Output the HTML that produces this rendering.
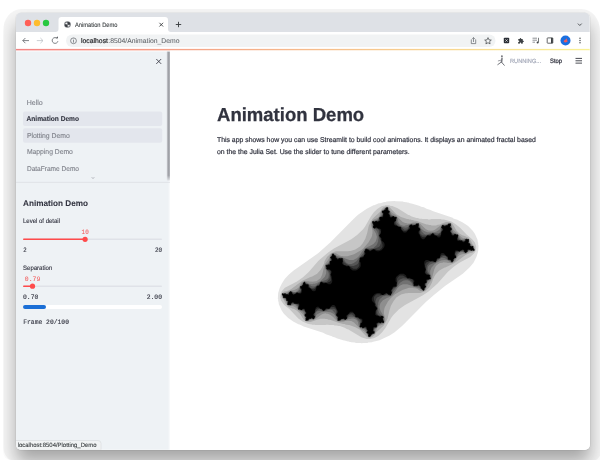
<!DOCTYPE html>
<html><head><meta charset="utf-8">
<style>
html,body{margin:0;padding:0;background:#fff;width:600px;height:460px;overflow:hidden}
#sc{position:absolute;left:2.8px;top:8.5px;width:597.2px;height:451.5px;overflow:hidden;border-radius:18px 18px 0 8px / 22px 22px 0 8px}
#win{position:absolute;left:13.2px;top:4.2px;width:573.7px;height:437px;border-radius:5px;background:#fff;
box-shadow:0 0 0 0.5px rgba(0,0,0,0.07),0 0 0 12.5px rgba(0,0,0,0.041),0 11.9px 17.1px -0.44px rgba(0,0,0,0.321)}
svg{position:absolute;left:0;top:0;will-change:transform}
text{font-family:"Liberation Sans",sans-serif;text-rendering:geometricPrecision}
.mono{font-family:"Liberation Mono",monospace}
</style></head>
<body>
<div id="sc"><div id="win"></div></div>
<svg width="600" height="460" viewBox="0 0 600 460">
<defs>
<clipPath id="wc"><rect x="16" y="12.7" width="573.7" height="437" rx="5"/></clipPath>
<linearGradient id="deco" x1="0" x2="1" y1="0" y2="0"><stop offset="0" stop-color="#ee5252"/><stop offset="1" stop-color="#f6ec6a"/></linearGradient>
<linearGradient id="sb" x1="0" x2="1" y1="0" y2="0"><stop offset="0" stop-color="#d2d4d8"/><stop offset="0.45" stop-color="#9c9ea4"/><stop offset="1" stop-color="#b4b6bb"/></linearGradient><linearGradient id="sbf" x1="0" x2="0" y1="0" y2="1"><stop offset="0" stop-color="#fff"/><stop offset="0.95" stop-color="#fff"/><stop offset="1" stop-color="#000"/></linearGradient><linearGradient id="sbe" x1="0" x2="1" y1="0" y2="0"><stop offset="0" stop-color="#eef2f5"/><stop offset="1" stop-color="#fafbfc"/></linearGradient><mask id="sbm"><rect x="160" y="51" width="15" height="131" fill="url(#sbf)"/></mask>
</defs>
<g clip-path="url(#wc)">
<!-- tab strip -->
<rect x="15" y="12" width="576" height="20" fill="#dee1e6"/>
<circle cx="28" cy="23" r="3.2" fill="#ff5f57"/>
<circle cx="37" cy="23" r="3.2" fill="#febc2e"/>
<circle cx="46" cy="23" r="3.2" fill="#28c840"/>
<!-- tab -->
<path d="M55.5 32 Q58.5 32 58.5 29 L58.5 20 Q58.5 17 61.5 17 L165 17 Q168 17 168 20 L168 29 Q168 32 171 32 Z" fill="#fff"/>
<g transform="translate(67.5 24.5)">
<circle r="3.3" fill="#7a7d82"/>
<ellipse cx="1.3" cy="-1.2" rx="1.5" ry="1.1" transform="rotate(40 1.3 -1.2)" fill="#3a3d42"/>
<ellipse cx="-1.3" cy="1.2" rx="1.5" ry="1.1" transform="rotate(40 -1.3 1.2)" fill="#3a3d42"/>
<ellipse cx="-1.1" cy="-1" rx="1" ry="0.8" fill="#f4f4f4"/>
<ellipse cx="1.1" cy="1.3" rx="1" ry="0.8" fill="#f4f4f4"/>
</g>
<text x="75" y="26.75" font-size="6.3" fill="#3c4043" textLength="42.5" lengthAdjust="spacingAndGlyphs" stroke="#3c4043" stroke-width="0.1">Animation Demo</text>
<path d="M159.4 22.8 L163.1 26.5 M163.1 22.8 L159.4 26.5" stroke="#3c4043" stroke-width="0.9"/>
<path d="M178.5 21.8 L178.5 27.2 M175.8 24.5 L181.2 24.5" stroke="#3c4043" stroke-width="0.95"/>
<path d="M577.9 23.6 L579.8 25.5 L581.7 23.6" fill="none" stroke="#3c4043" stroke-width="0.85"/>
<!-- toolbar -->
<rect x="15" y="32" width="576" height="17.5" fill="#fff"/>
<path d="M22.8 40.6 L29 40.6 M25.4 38 L22.8 40.6 L25.4 43.2" fill="none" stroke="#5f6368" stroke-width="0.8"/>
<path d="M36.8 40.6 L43 40.6 M40.4 38 L43 40.6 L40.4 43.2" fill="none" stroke="#bdc1c6" stroke-width="0.8"/>
<path d="M57.3 38.6 A2.9 2.9 0 1 0 57.9 41.2" fill="none" stroke="#5f6368" stroke-width="0.8"/>
<path d="M55.6 38.3 L58 38.3 L58 36.2 Z" fill="#5f6368"/>
<rect x="66" y="34.5" width="429.5" height="12.5" rx="6.25" fill="#f1f3f4"/>
<circle cx="73.5" cy="40.8" r="2.9" fill="none" stroke="#5f6368" stroke-width="0.7"/>
<path d="M73.5 40 L73.5 42.6" stroke="#5f6368" stroke-width="0.7"/>
<circle cx="73.5" cy="39" r="0.4" fill="#5f6368"/>
<text x="81" y="42.8" font-size="6.8" fill="#202124" textLength="27" lengthAdjust="spacingAndGlyphs" stroke="#202124" stroke-width="0.15">localhost</text>
<text x="108.3" y="42.8" font-size="6.8" fill="#5f6368" textLength="71.2" lengthAdjust="spacingAndGlyphs" stroke="#5f6368" stroke-width="0.05">:8504/Animation_Demo</text>
<!-- share -->
<path d="M471.6 39.6 L471.3 39.6 L471.3 43.6 L475.7 43.6 L475.7 39.6 L475.4 39.6 M473.5 42 L473.5 37.6 M472.2 38.9 L473.5 37.6 L474.8 38.9" fill="none" stroke="#5f6368" stroke-width="0.7"/>
<path d="M488 37.6 L489 39.9 L491.3 40.1 L489.6 41.6 L490.1 43.9 L488 42.7 L485.9 43.9 L486.4 41.6 L484.7 40.1 L487 39.9 Z" fill="none" stroke="#3c4043" stroke-width="0.7" stroke-linejoin="round"/>
<!-- ext icons -->
<rect x="503.8" y="37.8" width="5.4" height="5.4" rx="0.8" fill="#2b2f36"/>
<path d="M505.3 39.3 L507.7 41.7 M507.7 39.3 L505.3 41.7" stroke="#fff" stroke-width="0.6"/>
<path transform="translate(517.6 37.6) scale(0.275)" fill="#3c4043" d="M20.5 11H19V7c0-1.1-.9-2-2-2h-4V3.5C13 2.12 11.88 1 10.5 1S8 2.12 8 3.5V5H4c-1.1 0-1.99.9-1.99 2v3.8H3.5c1.49 0 2.7 1.21 2.7 2.7s-1.21 2.7-2.7 2.7H2V20c0 1.1.9 2 2 2h3.8v-1.5c0-1.49 1.21-2.7 2.7-2.7 1.49 0 2.7 1.21 2.7 2.7V22H17c1.1 0 2-.9 2-2v-4h1.5c1.38 0 2.5-1.12 2.5-2.5S21.88 11 20.5 11z"/>
<path d="M532.5 38.2 L537 38.2 M532.5 40.2 L537 40.2 M532.5 42.2 L535 42.2" stroke="#5f6368" stroke-width="0.7"/>
<path d="M538.5 37.8 L538.5 42.4" stroke="#3c4043" stroke-width="0.7"/>
<circle cx="537.6" cy="42.6" r="1" fill="#3c4043"/>
<rect x="547.2" y="37.9" width="5.6" height="5.3" rx="0.5" fill="none" stroke="#3c4043" stroke-width="0.8"/>
<rect x="551" y="37.9" width="1.8" height="5.3" fill="#3c4043"/>
<circle cx="565.5" cy="40.5" r="5" fill="#1a6fe0"/>
<path d="M563.6 41.4 Q564.2 39.8 565.8 39.6 L566.4 38.2 Q567.2 39.4 567 40.2 Q568.2 40.8 567.6 41.6 Q566.2 42.8 564.6 42.2 Z" fill="#ee5a5a"/>
<circle cx="580" cy="38.2" r="0.7" fill="#3c4043"/><circle cx="580" cy="40.5" r="0.7" fill="#3c4043"/><circle cx="580" cy="42.8" r="0.7" fill="#3c4043"/>
<!-- decoration -->
<rect x="15" y="48.9" width="576" height="1.5" fill="url(#deco)" opacity="0.72"/>
<!-- main -->
<rect x="170" y="50.6" width="421" height="400" fill="#fff"/>
<!-- header -->
<g stroke="#74767c" stroke-linecap="round" fill="none">
<circle cx="501.9" cy="56.3" r="0.95" fill="#74767c" stroke="none"/>
<path d="M502 58.3 L501.6 62" stroke-width="1.5"/>
<path d="M501.6 60 L498.3 60.9" stroke-width="0.7"/>
<path d="M501.4 62 L497.8 64.6" stroke-width="1"/>
<path d="M501.4 62 L504.3 65.3" stroke-width="1"/>
</g>
<text x="510" y="63" font-size="6.0" fill="#a3a8b8" textLength="31" lengthAdjust="spacingAndGlyphs" stroke="#a3a8b8" stroke-width="0.15">RUNNING...</text>
<text x="550" y="63.3" font-size="6.4" fill="#31333f" textLength="12" lengthAdjust="spacingAndGlyphs" stroke="#31333f" stroke-width="0.25">Stop</text>
<g fill="#55575e"><rect x="575.5" y="57.9" width="6.5" height="1.05"/><rect x="575.5" y="60.25" width="6.5" height="1.05"/><rect x="575.5" y="62.6" width="6.5" height="1.05"/></g>
<!-- title -->
<text x="217" y="121.3" font-size="18.9" font-weight="bold" fill="#31333f" textLength="147.2" lengthAdjust="spacingAndGlyphs" stroke="#31333f" stroke-width="0.25">Animation Demo</text>
<text x="217" y="142.3" font-size="7.0" fill="#31333f" textLength="318.8" lengthAdjust="spacingAndGlyphs" stroke="#31333f" stroke-width="0.2">This app shows how you can use Streamlit to build cool animations. It displays an animated fractal based</text>
<text x="217" y="153.5" font-size="7.0" fill="#31333f" textLength="192.7" lengthAdjust="spacingAndGlyphs" stroke="#31333f" stroke-width="0.2">on the the Julia Set. Use the slider to tune different parameters.</text>
<!-- julia -->
<g transform="translate(217.1 164.7) scale(0.3356)">
<path fill="rgb(227,227,227)" fill-rule="evenodd" d="M432 532 430 532 428 531 412 531 412 530 400 529 398 528 394 528 394 527 390 527 380 524 378 524 356 517 352 515 344 513 342 511 324 505 316 501 258 482 246 476 244 476 228 468 212 457 199 444 192 434 184 416 183 408 182 408 182 400 181 400 182 382 187 366 193 354 202 340 214 327 228 315 280 279 302 263 322 245 338 231 408 160 420 149 446 131 466 121 468 121 482 115 486 115 498 111 504 111 504 110 530 108 532 109 554 110 556 111 560 111 562 112 566 112 566 113 570 113 572 114 582 116 604 123 608 125 616 127 624 131 636 135 644 139 702 158 704 160 716 164 732 172 748 183 761 196 768 206 776 224 777 232 778 232 778 240 779 240 778 258 773 274 764 292 752 306 732 325 680 361 646 388 622 409 552 480 528 500 514 509 484 523 462 528 462 529 450 530 448 531 434 531 432 532Z"/>
<path fill="rgb(198,198,198)" fill-rule="evenodd" d="M460 519 446 519 430 514 390 490 388 490 380 486 366 481 362 481 356 479 350 479 348 478 332 478 332 477 324 477 324 478 292 478 292 477 284 477 282 476 270 474 256 468 242 458 216 431 200 418 194 410 190 404 188 396 188 390 192 378 202 367 238 348 256 335 273 320 302 286 330 262 348 250 400 222 418 209 435 192 441 184 458 154 467 142 478 131 490 124 496 122 500 122 500 121 514 121 514 122 522 123 538 130 570 150 572 150 580 154 594 159 598 159 604 161 610 161 612 162 628 162 628 163 636 163 636 162 668 162 668 163 676 163 698 169 712 178 724 188 744 209 760 222 768 232 772 244 772 250 770 258 766 264 754 275 722 292 704 305 687 320 657 354 630 378 612 390 560 418 542 431 525 448 519 456 502 486 493 498 482 509 476 513 470 516 464 518 460 518 460 519Z"/>
<path fill="rgb(170,170,170)" fill-rule="evenodd" d="M456 516 450 515 446 513 426 492 412 484 394 478 390 478 388 477 384 477 380 475 376 475 370 473 364 472 336 462 332 462 328 460 322 460 322 459 306 459 306 460 296 462 292 464 278 469 268 469 266 468 258 462 247 444 238 435 228 429 226 429 212 423 204 414 199 404 192 394 191 386 196 380 202 377 206 377 214 374 220 371 244 353 254 346 280 334 282 334 298 325 308 314 312 308 319 294 320 288 328 274 340 263 354 258 392 258 392 257 398 257 412 253 426 244 434 234 442 220 447 204 452 182 459 168 464 160 486 140 489 134 496 127 500 125 506 124 514 127 534 148 548 156 566 162 570 162 572 163 576 163 580 165 584 165 586 166 596 168 624 178 628 178 632 180 638 180 638 181 654 181 654 180 664 178 668 176 682 171 692 171 700 175 705 182 713 196 722 205 732 211 734 211 748 217 756 226 761 236 768 246 769 254 767 258 760 262 754 263 740 269 716 287 706 294 680 306 678 306 662 315 652 326 648 332 643 342 640 352 632 366 620 377 606 382 568 382 568 383 562 383 548 387 534 396 526 406 518 420 513 436 508 458 501 472 496 480 474 500 471 506 464 513 456 516Z"/>
<path fill="rgb(142,142,142)" fill-rule="evenodd" d="M456 514 450 513 444 502 438 496 428 490 408 470 400 466 396 466 394 465 386 465 386 466 382 466 376 468 370 468 368 469 368 468 360 467 354 463 346 454 338 448 330 444 326 444 324 443 316 444 310 447 294 459 286 463 274 464 270 466 264 466 261 462 260 454 257 448 252 442 246 437 232 424 226 421 222 421 220 420 216 421 214 420 212 420 208 416 205 406 196 398 195 396 193 388 193 384 196 382 206 381 218 375 230 373 238 370 243 366 251 352 260 347 274 347 274 348 286 349 288 348 296 347 302 343 308 338 313 328 318 308 319 306 319 304 322 296 332 282 338 268 342 264 346 263 354 264 364 270 370 272 374 272 376 273 388 273 408 267 430 254 436 249 451 232 460 216 462 210 462 206 463 206 463 196 459 182 459 174 461 170 466 164 478 159 484 152 487 142 491 136 504 126 510 127 516 138 522 144 532 150 552 170 560 174 564 174 566 175 574 175 584 172 590 172 592 171 592 172 600 173 606 177 615 186 622 192 630 196 634 196 636 197 644 196 650 193 666 181 674 177 686 176 690 174 696 174 699 178 700 186 703 192 708 198 714 203 728 216 734 219 738 219 740 220 744 219 746 220 748 220 752 224 755 234 761 240 765 244 767 252 767 256 764 258 754 259 742 265 730 267 722 270 717 274 709 288 700 293 686 293 686 292 674 291 672 292 664 293 658 297 652 302 647 312 642 332 641 334 641 336 638 344 628 358 622 372 618 376 614 377 606 376 596 370 590 368 586 368 584 367 572 367 552 373 530 386 517 398 509 408 500 424 498 430 498 434 497 434 497 444 501 458 501 466 499 470 494 476 482 481 476 488 473 498 469 504 456 514Z"/>
<path fill="rgb(113,113,113)" fill-rule="evenodd" d="M452 514 450 512 450 508 444 500 444 498 440 492 434 488 428 487 424 484 421 476 420 470 418 466 414 461 406 458 400 458 400 459 392 460 386 463 382 463 382 464 370 464 366 466 360 466 357 462 352 450 348 445 338 440 330 439 328 438 320 438 318 439 310 440 300 445 296 448 292 458 288 461 280 460 270 465 264 465 263 456 261 454 259 444 256 438 250 435 244 433 240 430 237 422 232 417 226 417 222 419 210 418 209 410 204 402 202 399 198 398 196 396 196 392 193 388 193 384 198 384 200 383 208 383 212 382 218 376 222 376 228 379 234 379 238 377 243 372 245 366 249 360 255 354 256 350 260 348 262 348 274 355 284 356 286 355 290 355 296 353 306 348 312 343 321 334 325 324 325 316 322 308 322 300 326 296 330 294 333 290 336 282 337 274 344 264 348 265 356 271 376 277 380 279 394 284 406 284 416 279 423 272 431 260 438 251 448 245 454 243 466 236 473 228 476 218 476 214 473 204 463 188 463 184 462 182 462 170 464 167 470 167 477 164 489 150 490 148 490 138 492 136 496 135 500 130 504 127 508 126 510 128 510 132 516 140 516 142 520 149 526 152 532 153 536 156 539 164 540 170 542 174 546 179 554 182 560 182 560 181 568 180 574 177 578 177 578 176 590 176 594 174 600 174 603 178 608 190 616 197 626 201 640 202 642 201 646 201 654 199 660 195 664 192 668 182 672 179 680 180 690 175 696 175 697 184 699 186 701 196 704 202 710 205 716 207 720 210 723 218 728 223 734 223 738 221 750 222 751 230 756 238 758 241 762 242 764 244 764 248 767 252 767 256 762 256 760 257 752 257 748 258 742 264 738 264 732 261 726 261 722 263 717 268 715 274 711 280 705 286 704 290 700 292 698 292 686 285 676 284 674 285 670 285 664 287 654 292 648 297 639 306 635 316 635 324 638 332 638 340 634 344 630 346 627 350 624 358 623 366 616 376 612 375 604 369 584 363 580 361 566 356 554 356 544 361 537 368 529 380 522 389 512 395 506 397 494 404 487 412 484 422 484 426 487 436 497 452 497 456 498 458 498 470 496 473 490 473 484 476 471 490 470 492 470 502 468 504 464 505 458 512 452 514Z"/>
<path fill="rgb(85,85,85)" fill-rule="evenodd" d="M454 513 451 512 450 506 445 500 445 498 446 496 445 492 440 488 432 487 430 485 426 484 424 482 424 480 425 478 425 470 424 468 416 458 408 454 398 452 398 453 394 453 390 456 389 458 382 463 376 461 372 461 366 465 360 465 358 462 359 462 358 456 352 446 351 442 344 434 340 432 332 432 326 435 320 436 318 437 308 436 308 435 300 436 296 438 293 444 293 452 292 456 288 461 284 459 280 459 274 461 272 464 266 464 266 465 263 464 264 462 264 454 260 448 262 442 261 438 258 435 250 434 242 431 241 422 238 419 232 415 224 415 218 419 210 418 209 416 210 416 210 408 209 406 205 404 205 400 204 398 200 398 196 396 197 394 193 386 194 384 200 385 202 383 206 385 210 385 218 377 220 377 226 381 236 381 242 378 247 372 247 364 254 358 255 354 260 349 262 349 264 352 272 356 282 362 290 363 294 361 308 349 322 344 328 341 332 336 333 326 331 320 324 310 323 300 324 298 330 297 333 294 338 284 337 276 341 272 342 268 344 265 346 265 360 277 372 277 374 278 378 282 381 288 386 293 392 296 400 296 406 294 415 288 421 280 435 264 438 258 439 254 442 250 444 249 458 250 458 249 466 248 468 246 475 240 478 234 480 228 480 222 481 222 481 214 480 212 480 208 477 198 472 192 464 188 465 178 462 174 463 168 466 168 468 169 468 168 478 166 482 162 483 158 493 150 493 146 491 144 491 138 492 136 494 137 496 136 501 132 502 129 506 127 509 128 510 134 515 140 515 142 514 144 515 148 520 152 528 153 530 155 534 156 536 158 536 160 535 162 535 170 536 172 544 182 552 186 562 188 562 187 566 187 570 184 571 182 578 177 584 179 588 179 594 175 600 175 602 178 601 178 602 184 608 194 609 198 616 206 620 208 628 208 634 205 640 204 642 203 652 204 652 205 660 204 664 202 667 196 667 188 668 184 672 179 676 181 680 181 686 179 688 176 694 176 694 175 696 176 696 186 700 192 698 198 699 202 702 205 706 205 718 209 719 218 722 221 728 225 736 225 742 221 750 222 751 224 750 224 750 232 751 234 755 236 755 240 756 242 760 242 764 244 763 246 767 254 766 256 760 255 758 257 754 255 750 255 742 263 740 263 734 259 724 259 718 262 713 268 713 276 706 282 705 286 700 291 698 291 696 288 688 284 678 278 670 277 666 279 652 291 638 296 632 299 628 304 627 314 629 320 636 330 637 340 636 342 630 343 627 346 622 356 623 364 619 368 618 372 616 375 614 375 600 363 588 363 586 362 582 358 579 352 574 347 568 344 560 344 554 346 545 352 539 360 525 376 522 382 521 386 518 390 516 391 502 390 502 391 494 392 492 394 485 400 482 406 480 412 480 418 479 418 479 426 480 428 480 432 483 442 488 448 496 452 495 462 498 466 497 472 494 472 492 471 492 472 482 474 478 478 477 482 467 490 467 494 469 496 469 502 468 504 466 503 464 504 459 508 458 511 454 513Z"/>
<path fill="rgb(57,57,57)" fill-rule="evenodd" d="M454 513 451 512 450 508 451 506 445 500 447 498 446 490 442 486 434 487 432 484 426 484 425 482 428 466 424 460 422 458 414 456 402 446 396 446 391 450 387 458 382 462 380 462 378 460 372 460 370 461 366 464 360 465 359 464 359 454 354 448 355 436 353 432 348 429 338 429 332 431 328 431 318 436 316 436 312 432 306 430 302 431 293 438 291 442 290 450 292 452 292 454 289 458 288 460 286 460 284 458 280 458 278 460 274 459 272 462 272 464 266 464 266 465 263 464 264 462 264 458 266 456 261 450 261 448 263 444 263 440 261 436 258 433 256 432 250 434 246 431 244 432 242 431 241 430 242 428 242 420 241 418 238 415 232 415 226 412 224 412 221 414 220 418 218 419 216 417 210 418 209 416 211 414 210 412 211 408 206 404 206 400 204 397 197 396 197 392 196 390 194 388 194 384 200 385 202 383 206 386 210 386 213 384 214 380 216 380 218 377 224 380 228 384 232 384 236 381 246 380 250 376 250 372 248 368 248 362 252 362 254 360 256 356 256 354 260 349 260 349 266 356 272 357 276 364 278 367 280 368 286 368 292 365 300 359 304 357 310 349 324 350 328 348 335 340 337 328 336 328 336 322 334 318 325 310 326 306 324 304 324 300 328 299 335 294 336 288 340 286 340 280 337 276 342 272 342 268 344 265 346 265 350 270 352 270 354 272 355 276 358 279 362 279 362 278 374 278 375 280 375 284 378 290 386 297 396 301 406 302 414 299 419 296 422 290 424 278 428 275 436 270 438 266 438 260 444 250 446 250 450 253 456 253 458 252 470 250 482 245 485 242 488 234 488 228 482 214 483 198 481 194 478 191 468 190 464 186 466 180 465 180 465 176 463 174 463 168 468 169 470 170 474 167 476 168 480 168 483 164 483 160 485 156 490 155 494 150 494 144 491 142 492 140 492 138 496 137 498 134 500 134 502 132 502 130 504 129 506 127 509 128 510 132 509 134 515 140 513 142 514 150 518 154 526 153 528 156 534 156 535 158 532 174 536 180 538 182 546 184 558 194 564 194 569 190 573 182 578 178 580 178 582 180 588 180 590 179 594 176 600 175 601 176 601 186 606 192 605 204 606 206 612 211 622 211 628 209 632 209 642 204 644 204 648 208 654 210 658 209 667 202 669 198 670 190 668 188 668 186 671 182 672 180 674 180 676 182 680 182 682 180 686 181 688 178 688 176 694 176 694 175 696 176 696 182 694 184 699 190 699 192 697 196 697 200 699 204 702 207 704 208 710 206 714 209 716 208 718 209 719 210 718 212 718 220 719 222 722 225 728 225 734 228 736 228 739 226 740 222 742 221 744 223 750 222 751 224 749 226 750 228 749 232 754 236 754 240 756 243 763 244 763 248 764 250 766 252 766 256 760 255 758 257 754 254 750 254 747 256 746 260 744 260 742 263 736 260 732 256 728 256 724 259 714 260 710 264 710 268 712 272 712 278 708 278 706 280 704 284 704 286 700 291 700 291 694 284 688 283 684 276 682 273 680 272 674 272 668 275 660 281 656 283 650 291 636 290 632 292 625 300 623 312 624 312 624 318 626 322 635 330 634 334 636 336 636 340 632 341 625 346 624 352 620 354 620 360 623 364 618 368 618 372 616 375 614 375 610 370 608 370 607 368 605 364 602 361 598 361 598 362 586 362 585 360 585 356 582 350 574 343 564 339 554 338 546 341 541 344 538 350 536 362 532 365 524 370 522 374 522 380 516 390 514 390 510 387 504 387 502 388 490 390 478 395 475 398 472 406 472 412 478 426 477 442 479 446 482 449 492 450 496 454 494 460 495 460 495 464 497 466 497 472 492 471 490 470 486 473 484 472 480 472 477 476 477 480 475 484 470 485 466 490 466 496 469 498 468 500 468 502 464 503 462 506 460 506 458 508 458 510 456 511 454 513Z"/>
<path fill="rgb(28,28,28)" fill-rule="evenodd" d="M454 513 452 512 451 510 452 506 451 504 446 500 449 494 446 490 445 486 442 484 440 484 434 487 432 484 430 483 428 484 425 482 427 478 427 474 431 470 431 464 430 462 418 455 412 454 410 446 406 443 400 442 392 445 388 450 387 452 387 458 384 459 382 462 378 459 374 459 374 460 368 460 366 464 364 463 362 465 359 464 360 462 359 458 361 456 361 454 355 448 355 446 358 440 357 434 355 430 350 425 348 424 340 424 332 430 326 429 318 435 316 435 312 431 308 429 306 428 298 428 293 432 292 440 288 444 288 448 292 454 289 456 289 458 288 460 286 458 280 457 278 459 274 459 270 464 270 463 264 464 265 462 264 458 266 456 266 454 263 452 261 448 265 444 265 440 262 436 261 432 258 430 256 430 252 433 250 433 248 431 242 431 242 428 243 426 242 424 244 422 244 418 242 415 230 414 228 411 224 411 220 414 220 416 218 419 216 417 212 417 212 418 210 416 211 414 210 412 212 410 212 408 206 404 207 400 206 398 202 396 200 397 197 396 198 394 196 392 197 390 194 388 194 384 196 385 196 384 200 386 202 384 204 384 206 387 208 386 212 387 214 386 214 382 220 377 221 380 224 382 224 384 226 386 232 385 238 381 242 383 248 382 251 378 251 370 248 368 249 366 248 362 252 362 254 360 257 356 256 354 260 349 261 350 264 356 268 356 273 358 272 360 273 364 280 370 286 372 288 372 292 370 298 361 304 360 306 356 307 352 310 349 316 352 328 352 336 349 340 344 340 336 338 332 339 318 334 313 330 313 326 310 326 304 324 302 324 300 334 298 336 296 336 288 338 288 341 286 341 280 338 278 338 276 341 274 343 270 343 268 346 265 348 268 348 270 353 272 353 276 358 280 360 281 366 278 366 279 374 279 374 284 375 284 375 292 378 298 382 300 392 301 406 310 416 310 422 304 424 300 424 284 425 282 425 278 428 276 432 276 437 272 440 266 439 258 444 251 450 253 456 256 458 256 464 252 472 252 476 254 484 254 486 253 491 248 493 244 493 238 488 224 488 220 487 218 483 212 483 210 487 204 487 198 485 194 480 190 474 188 468 189 464 186 467 180 465 178 466 176 463 174 463 170 466 169 470 171 472 168 476 169 480 169 482 168 484 166 484 162 483 162 485 158 485 156 490 156 494 154 495 144 491 142 492 140 492 138 498 137 500 134 502 134 502 130 504 129 506 127 508 128 509 130 508 134 509 136 514 140 511 146 514 150 515 154 518 156 520 156 526 153 528 156 530 157 532 156 535 158 533 162 533 166 529 170 529 176 532 179 542 185 548 186 550 194 554 197 560 198 568 195 572 190 573 188 573 182 576 181 578 178 582 181 586 181 586 180 592 180 594 176 596 177 598 175 601 176 600 178 601 182 599 184 599 186 605 192 605 194 602 200 603 206 605 210 612 216 620 216 628 210 634 211 642 205 644 205 648 209 652 211 654 212 662 212 667 208 668 200 672 196 672 192 668 186 671 184 671 182 672 180 674 182 680 183 682 181 686 181 690 176 690 177 696 176 695 178 696 182 694 184 694 186 697 188 699 192 695 196 695 200 698 204 699 208 702 210 704 210 708 207 710 207 712 209 718 209 718 212 717 214 718 216 716 218 716 222 718 225 730 226 732 229 736 229 740 226 740 224 742 221 744 223 748 223 748 222 750 224 749 226 750 228 748 230 748 232 754 236 753 240 754 242 758 244 760 243 763 244 762 246 764 248 763 250 766 252 766 256 764 255 764 256 760 254 758 256 756 256 754 253 752 254 748 253 746 254 746 258 740 263 739 260 736 258 736 256 734 254 728 255 722 259 718 257 712 258 709 262 709 270 712 272 711 274 712 278 708 278 706 280 703 284 704 286 700 291 699 290 696 284 692 284 687 282 688 280 687 276 680 270 674 268 672 268 668 270 662 279 656 280 654 284 653 288 650 291 644 288 632 288 624 291 620 296 620 304 622 308 621 322 626 327 630 327 634 330 634 336 636 338 636 340 626 342 624 344 624 352 622 352 619 354 619 360 622 362 622 364 619 366 617 370 617 372 614 375 612 372 612 370 607 368 607 364 602 360 600 359 594 362 594 361 586 361 586 356 585 356 585 348 582 342 578 340 568 339 554 330 544 330 538 336 536 340 536 356 535 358 535 362 532 364 528 364 523 368 520 374 521 382 516 389 510 387 504 384 502 384 496 388 488 388 484 386 476 386 474 387 469 392 467 396 467 402 472 416 472 420 473 422 477 428 477 430 473 436 473 442 475 446 480 450 486 452 492 451 496 454 493 460 495 462 494 464 497 466 497 470 494 471 490 469 488 472 484 471 480 471 478 472 476 474 476 478 477 478 475 482 475 484 470 484 466 486 465 496 469 498 468 500 468 502 462 503 460 506 458 506 458 510 456 511 454 513Z"/>
<path fill="rgb(0,0,0)" fill-rule="evenodd" d="M454 513 452 512 451 510 452 504 446 500 447 498 450 496 450 494 446 490 446 486 444 483 440 483 434 487 434 486 430 483 428 484 425 482 428 478 427 474 432 470 433 468 433 462 432 460 428 458 424 458 420 454 414 454 412 452 413 450 411 446 404 438 398 438 396 439 390 446 388 447 385 450 385 452 387 456 387 458 386 458 382 462 378 458 376 458 372 460 370 459 367 462 368 462 366 464 364 463 360 464 361 452 358 452 355 448 360 440 360 436 357 432 354 424 350 419 348 418 344 418 339 422 338 424 334 429 326 428 322 430 322 432 318 435 316 435 312 429 308 429 302 423 298 423 294 426 291 436 291 440 290 441 286 446 288 450 291 452 291 454 289 456 289 458 288 460 282 456 280 456 278 459 274 458 270 464 270 463 264 464 265 462 264 458 266 458 266 454 267 454 266 452 264 452 261 448 264 445 266 444 266 440 262 436 262 432 260 429 256 429 254 430 252 433 250 433 248 431 246 430 242 431 242 428 243 428 243 424 245 422 245 416 244 414 242 413 238 414 234 413 232 414 230 411 226 409 224 409 219 414 220 416 218 418 216 417 212 417 212 418 210 416 211 414 210 412 212 410 212 406 206 404 208 400 204 397 202 395 200 397 197 396 198 392 196 392 197 390 196 388 194 388 194 384 200 386 201 384 202 384 204 387 210 387 212 388 214 387 215 384 214 382 218 380 220 377 221 380 223 380 223 384 228 388 232 385 234 385 238 381 244 384 250 384 252 380 253 370 249 368 248 362 250 363 254 362 254 360 257 358 256 354 258 353 260 349 264 357 272 358 272 366 278 369 284 376 288 377 292 376 294 374 297 362 298 361 300 362 304 361 306 358 307 354 310 349 318 354 324 352 332 356 338 356 342 352 343 348 343 342 342 342 341 332 338 328 341 322 341 318 340 316 336 312 332 312 332 311 328 312 326 310 327 306 326 304 324 302 324 300 326 300 326 299 328 300 330 298 336 298 337 296 336 292 337 290 336 288 342 286 342 280 338 278 338 276 343 272 343 268 344 267 346 265 350 271 353 272 352 276 355 278 358 282 360 283 364 279 366 280 370 280 370 279 374 280 374 282 373 284 375 288 373 290 372 294 376 299 384 301 386 303 392 302 396 306 397 310 404 315 414 315 418 313 426 306 428 302 428 292 424 288 426 284 426 278 436 276 437 274 438 270 440 268 442 266 442 264 439 258 441 258 442 252 444 251 446 253 450 253 454 258 456 258 466 252 468 252 472 256 476 258 482 258 490 255 496 248 499 242 499 236 497 232 490 226 490 220 483 212 488 204 489 194 488 192 484 190 480 190 474 186 470 189 468 189 466 187 464 186 467 182 467 180 466 180 466 176 463 174 464 172 463 170 464 169 466 170 466 169 468 171 470 171 472 169 474 168 478 171 486 167 486 164 484 162 485 156 490 156 492 157 495 154 496 144 491 142 492 140 492 138 494 138 494 137 496 138 500 134 502 135 503 132 502 130 506 129 506 127 508 128 509 130 508 136 514 140 513 142 510 144 510 146 514 150 514 154 516 157 520 157 526 153 526 155 530 157 532 156 535 158 532 162 533 166 528 170 527 172 527 178 528 180 532 182 536 182 540 186 546 186 548 188 547 190 549 194 556 202 562 202 564 201 570 194 572 193 575 190 575 188 573 184 573 182 574 182 578 178 582 182 584 182 588 180 590 181 593 178 592 178 594 176 596 177 600 176 599 188 602 188 605 192 600 200 600 204 603 208 607 218 612 222 616 222 618 221 621 218 622 216 626 211 634 212 638 210 638 208 642 205 644 205 648 211 654 212 658 217 664 216 667 212 669 200 670 199 674 194 672 190 669 188 669 186 671 184 671 182 672 180 678 184 680 184 682 181 686 182 690 176 690 177 696 176 695 178 696 182 694 182 694 186 693 186 694 188 696 188 699 192 696 195 694 196 694 200 698 204 698 208 700 211 704 211 706 210 708 207 710 207 712 209 714 210 718 209 718 212 717 212 717 216 715 218 715 224 716 226 718 227 722 226 726 227 728 226 730 229 734 231 736 231 741 226 740 224 742 222 744 223 748 223 748 222 750 224 749 226 750 228 748 230 748 234 754 236 752 240 756 243 758 245 760 243 763 244 762 248 764 248 763 250 764 251 764 252 766 252 766 256 760 254 759 256 758 256 756 253 750 253 748 252 746 254 745 256 746 258 742 260 740 263 739 260 737 260 737 256 732 252 728 255 726 255 722 259 716 256 710 256 708 260 707 270 711 272 712 278 710 277 706 278 706 280 703 282 704 286 702 287 700 291 696 283 688 282 688 274 682 271 676 264 672 263 668 264 666 266 663 278 662 279 660 278 656 279 654 282 653 286 650 291 642 286 636 288 628 284 622 284 618 288 617 292 617 298 618 298 619 308 622 312 619 318 619 322 620 324 624 328 628 328 628 329 632 328 634 330 633 334 634 336 636 338 636 340 634 340 634 341 632 340 630 342 624 342 623 344 624 348 623 350 624 352 618 354 618 360 622 362 622 364 617 368 617 372 616 373 614 375 610 369 607 368 608 364 604 361 602 358 600 357 596 361 594 360 590 360 590 361 586 360 586 358 587 356 585 352 587 350 588 346 584 341 576 339 574 337 568 338 564 334 563 330 556 325 546 325 542 327 534 334 532 338 532 348 536 352 534 356 534 362 524 364 523 366 522 370 520 372 518 374 518 376 521 382 519 382 518 388 516 389 514 387 510 387 506 382 504 382 494 388 492 388 488 384 484 382 478 382 470 385 464 392 461 398 461 404 463 408 470 414 470 420 477 428 472 436 471 446 472 448 476 450 480 450 486 454 490 451 492 451 494 453 496 454 493 458 493 460 494 460 494 464 497 466 496 468 497 470 496 471 494 470 494 471 492 469 490 469 488 471 486 472 482 469 474 473 474 476 476 478 475 484 470 484 468 483 465 486 464 496 469 498 468 500 468 502 466 502 466 503 464 502 460 506 458 505 457 508 458 510 454 511 454 513Z"/>
</g>
<!-- sidebar -->
<rect x="15" y="51.4" width="153" height="400" fill="#eef2f5"/><rect x="168" y="51.4" width="2" height="400" fill="url(#sbe)"/>
<rect x="166.8" y="51.6" width="3.2" height="129" fill="url(#sb)" mask="url(#sbm)"/>
<path d="M156.3 59 L161.2 63.9 M161.2 59 L156.3 63.9" stroke="#31333f" stroke-width="0.85"/>
<text x="26.7" y="105" font-size="7.1" fill="#7f818a" textLength="16" lengthAdjust="spacingAndGlyphs" stroke="#7f818a" stroke-width="0.12">Hello</text>
<rect x="23" y="111.5" width="139.2" height="14.5" rx="2" fill="#e3e6ed"/>
<text x="26.5" y="121.3" font-size="7.1" font-weight="bold" fill="#31333f" textLength="52.5" lengthAdjust="spacingAndGlyphs" stroke="#31333f" stroke-width="0.1">Animation Demo</text>
<rect x="23" y="128.3" width="139.2" height="14.4" rx="2" fill="#e3e6ed"/>
<text x="26.9" y="137.7" font-size="7.1" fill="#7f818a" textLength="42.9" lengthAdjust="spacingAndGlyphs" stroke="#7f818a" stroke-width="0.12">Plotting Demo</text>
<text x="26.9" y="154" font-size="7.1" fill="#7f818a" textLength="46" lengthAdjust="spacingAndGlyphs" stroke="#7f818a" stroke-width="0.12">Mapping Demo</text>
<text x="26.9" y="170.6" font-size="7.1" fill="#7f818a" textLength="52.1" lengthAdjust="spacingAndGlyphs" stroke="#7f818a" stroke-width="0.12">DataFrame Demo</text>
<path d="M91.8 177.3 L93 178.5 L94.2 177.3" fill="none" stroke="#7f818a" stroke-width="0.6"/>
<rect x="15" y="181.9" width="155" height="0.6" fill="#d6d8de"/>
<text x="23" y="205.6" font-size="8.3" font-weight="bold" fill="#31333f" textLength="65" lengthAdjust="spacingAndGlyphs" stroke="#31333f" stroke-width="0.05">Animation Demo</text>
<text x="23" y="223.1" font-size="6.4" fill="#31333f" textLength="37" lengthAdjust="spacingAndGlyphs" stroke="#31333f" stroke-width="0.12">Level of detail</text>
<text class="mono" x="81.6" y="234" font-size="6.7" fill="#f25a5a" textLength="7.1" lengthAdjust="spacingAndGlyphs" stroke="#f25a5a" stroke-width="0.05">10</text>
<rect x="23" y="238.6" width="139" height="1.4" rx="0.7" fill="#dfe2e8"/>
<rect x="23" y="238.5" width="62" height="1.6" rx="0.8" fill="#ff4b4b"/>
<circle cx="85.1" cy="239.3" r="2.6" fill="#ff4b4b"/>
<text class="mono" x="23.3" y="251.7" font-size="6.7" fill="#31333f" textLength="3.4" lengthAdjust="spacingAndGlyphs" stroke="#31333f" stroke-width="0.1">2</text>
<text class="mono" x="155" y="251.7" font-size="6.7" fill="#31333f" textLength="7.2" lengthAdjust="spacingAndGlyphs" stroke="#31333f" stroke-width="0.1">20</text>
<text x="23" y="270" font-size="6.4" fill="#31333f" textLength="29.2" lengthAdjust="spacingAndGlyphs" stroke="#31333f" stroke-width="0.12">Separation</text>
<text class="mono" x="24.8" y="281.2" font-size="6.7" fill="#f25a5a" textLength="15.5" lengthAdjust="spacingAndGlyphs" stroke="#f25a5a" stroke-width="0.05">0.79</text>
<rect x="23" y="285.5" width="139" height="1.4" rx="0.7" fill="#dfe2e8"/>
<rect x="23" y="285.4" width="9.5" height="1.6" rx="0.8" fill="#ff4b4b"/>
<circle cx="32.5" cy="286.2" r="2.6" fill="#ff4b4b"/>
<text class="mono" x="23" y="298.8" font-size="6.7" fill="#31333f" textLength="15.3" lengthAdjust="spacingAndGlyphs" stroke="#31333f" stroke-width="0.1">0.70</text>
<text class="mono" x="146.7" y="298.8" font-size="6.7" fill="#31333f" textLength="15.3" lengthAdjust="spacingAndGlyphs" stroke="#31333f" stroke-width="0.1">2.00</text>
<rect x="23" y="305" width="139" height="4" rx="2" fill="#fff"/>
<rect x="23" y="305" width="23" height="4" rx="2" fill="#1b6fd6"/>
<text class="mono" x="23.2" y="324" font-size="6.8" fill="#31333f" textLength="45.8" lengthAdjust="spacingAndGlyphs" stroke="#31333f" stroke-width="0.1">Frame 20/100</text>
<!-- status bubble -->
<path d="M15 440.5 L98 440.5 Q101 440.5 101 443.5 L101 450 L15 450 Z" fill="#f1f3f4" stroke="#d0d2d6" stroke-width="0.5"/>
<text x="17.7" y="447.3" font-size="6.2" fill="#3c4043" textLength="78.8" lengthAdjust="spacingAndGlyphs" stroke="#3c4043" stroke-width="0.1">localhost:8504/Plotting_Demo</text>
</g>
</svg>
</body></html>
